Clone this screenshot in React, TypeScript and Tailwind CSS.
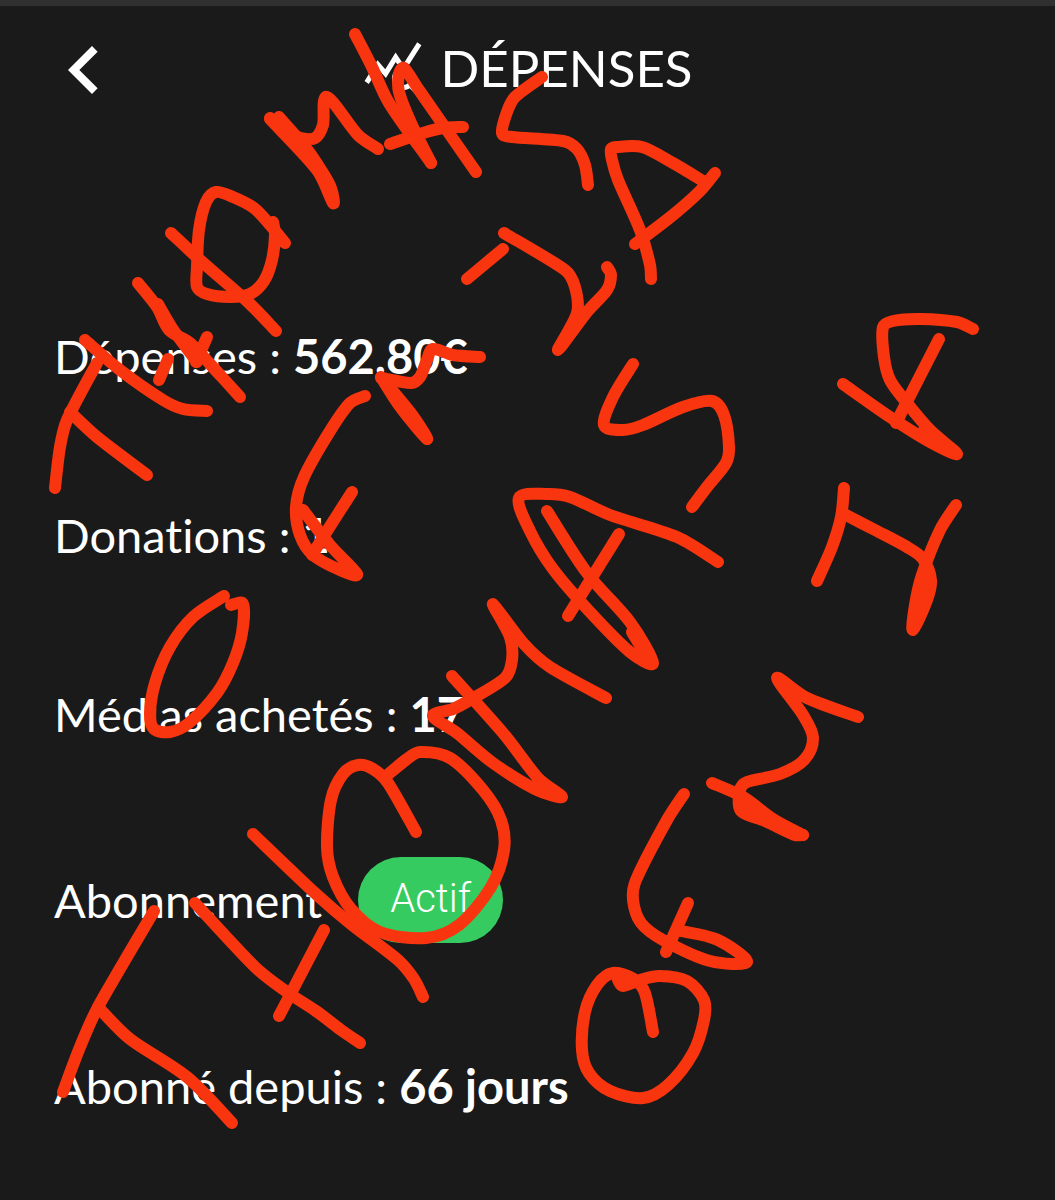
import React from 'react';
import { MdChevronLeft, MdQueryStats } from 'react-icons/md';

type Point = [number, number];

// Freehand marker strokes, one list of points per pen movement
const strokes: Point[][] = [
  [[55, 488], [60, 447], [67, 420], [97, 363]],
  [[70, 412], [97, 437], [147, 475]],
  [[85, 340], [120, 370], [163, 400], [183, 409], [207, 411]],
  [[138, 283], [157, 307], [169, 330], [190, 343], [220, 375], [240, 397]],
  [[158, 304], [172, 328], [197, 362]],
  [[207, 337], [196, 362]],
  [[168, 359], [159, 380]],
  [[171, 233], [200, 260], [250, 304], [276, 331]],
  [[285, 243], [271, 226], [254, 208], [233, 197], [216, 192], [206, 202], [199, 230], [197, 267], [197, 287], [207, 294], [230, 297], [250, 294], [264, 281], [272, 260], [275, 235], [273, 222]],
  [[270, 118], [287, 132], [301, 138], [315, 138], [323, 125], [327, 97], [358, 135], [378, 149]],
  [[279, 117], [306, 148], [321, 170], [331, 188], [333, 203], [317, 170], [270, 119]],
  [[355, 34], [372, 67], [389, 103], [431, 163]],
  [[431, 163], [411, 123], [399, 92], [399, 74], [404, 68], [419, 90], [476, 172]],
  [[390, 144], [423, 133], [443, 128], [463, 127]],
  [[542, 77], [515, 97], [507, 112], [502, 133], [512, 137], [563, 141], [577, 149], [585, 165], [588, 185]],
  [[651, 279], [650, 265], [640, 230], [618, 180], [612, 160], [611, 149], [617, 147], [642, 147], [673, 163], [703, 181]],
  [[715, 173], [700, 191], [673, 215], [635, 244]],
  [[504, 233], [565, 270], [575, 287], [577, 313], [558, 350], [587, 312], [607, 290], [611, 275], [607, 267]],
  [[503, 249], [467, 279]],
  [[480, 357], [453, 355], [433, 349], [427, 360], [420, 377], [411, 383], [381, 378]],
  [[381, 377], [401, 408], [427, 439], [413, 416], [381, 377]],
  [[365, 396], [350, 403], [330, 431], [304, 477], [296, 507], [300, 535], [313, 555], [340, 570], [357, 574], [330, 545], [303, 510]],
  [[352, 492], [327, 531], [312, 555]],
  [[224, 596], [193, 617], [170, 647], [155, 683], [150, 714], [154, 729], [170, 732], [189, 723], [217, 693], [233, 663], [242, 633], [243, 604], [231, 605]],
  [[633, 364], [613, 397], [604, 425], [623, 430], [643, 425], [683, 407], [712, 401], [724, 415], [729, 447], [726, 463], [707, 487], [692, 507]],
  [[718, 562], [677, 537], [610, 515], [570, 497], [547, 494], [519, 498], [530, 531], [553, 569], [590, 612], [630, 652], [653, 663], [630, 622], [587, 573], [547, 511]],
  [[632, 632], [643, 650]],
  [[619, 534], [568, 616]],
  [[606, 698], [550, 667], [524, 644], [493, 604], [510, 637], [512, 660], [505, 678], [470, 700], [453, 709], [433, 716], [457, 733], [493, 763], [535, 789], [562, 797], [538, 778], [503, 733], [452, 676]],
  [[973, 329], [957, 322], [920, 319], [893, 321], [883, 327], [884, 357], [890, 380], [907, 403], [930, 430], [957, 454], [930, 442], [890, 417], [843, 384]],
  [[924, 430], [945, 446]],
  [[939, 339], [896, 423]],
  [[844, 488], [841, 517], [832, 547], [817, 581]],
  [[842, 513], [875, 530], [907, 547], [923, 559], [931, 580], [927, 600], [913, 630], [915, 605], [922, 575], [940, 530], [956, 505]],
  [[922, 578], [923, 602], [918, 615]],
  [[858, 717], [807, 698], [777, 678], [803, 715], [813, 738], [804, 760], [780, 774], [747, 782], [740, 790], [741, 811], [765, 821], [795, 835], [803, 835]],
  [[712, 783], [743, 797], [773, 819], [803, 835]],
  [[746, 800], [750, 808], [785, 827]],
  [[684, 794], [667, 820], [636, 880], [633, 900], [641, 923], [663, 940], [710, 961], [747, 962], [718, 940], [681, 931]],
  [[688, 903], [666, 952]],
  [[653, 1032], [645, 993], [634, 979], [613, 973], [597, 985], [585, 1012], [582, 1050], [589, 1073], [610, 1091], [643, 1098], [668, 1085], [693, 1053], [704, 1020], [704, 1000], [687, 981], [660, 976], [640, 980], [623, 986], [618, 980]],
  [[416, 832], [388, 783], [373, 769], [358, 765], [343, 774], [331, 800], [327, 847], [333, 877], [351, 909], [380, 932], [426, 938], [459, 925], [491, 887], [504, 850], [501, 820], [483, 790], [450, 758], [420, 752], [407, 759], [385, 777]],
  [[253, 834], [316, 894], [351, 924], [398, 960], [414, 979], [423, 997]],
  [[195, 903], [255, 967], [287, 992], [316, 1011], [341, 1030], [360, 1043]],
  [[324, 930], [279, 1016]],
  [[154, 911], [98, 1007], [80, 1047], [63, 1092]],
  [[98, 1007], [130, 1039], [187, 1077], [232, 1123]],
];

// Runs a smooth curve through the points of a stroke
const toPath = (points: Point[]) => {
  let d = `M${points[0][0]} ${points[0][1]}`;
  for (let i = 0; i < points.length - 1; i++) {
    const p0 = points[i - 1] || points[i];
    const p1 = points[i];
    const p2 = points[i + 1];
    const p3 = points[i + 2] || p2;
    const length = Math.hypot(p2[0] - p1[0], p2[1] - p1[1]);
    const handle = (a: Point, b: Point) => {
      const dx = (b[0] - a[0]) / 6;
      const dy = (b[1] - a[1]) / 6;
      const scale = Math.min(1, length / 3 / (Math.hypot(dx, dy) || 1));
      return [dx * scale, dy * scale];
    };
    const h1 = handle(p0, p2);
    const h2 = handle(p1, p3);
    d += `C${p1[0] + h1[0]} ${p1[1] + h1[1]} ${p2[0] - h2[0]} ${p2[1] - h2[1]} ${p2[0]} ${p2[1]}`;
  }
  return d;
};

const Scribbles: React.FC = () => (
  <svg
    viewBox="0 0 1055 1200"
    fill="none"
    stroke="#f8350f"
    strokeWidth="12"
    strokeLinecap="round"
    strokeLinejoin="round"
    aria-hidden="true"
    className="absolute top-0 left-0 w-full pointer-events-none"
  >
    {strokes.map((points, index) => (
      <path key={index} d={toPath(points)} />
    ))}
  </svg>
);

interface StatProps {
  label: string;
  value: string;
}

const Stat: React.FC<StatProps> = ({ label, value }) => (
  <p>
    {label} : <strong className="font-bold">{value}</strong>
  </p>
);

const App: React.FC = () => {
  return (
    <div className="relative min-h-screen bg-[#1a1a1a] font-['Lato',sans-serif] [font-variant-ligatures:none] text-white overflow-hidden">
      <div className="h-[6px] bg-[#303030]" />

      {/* Header */}
      <header className="grid grid-cols-[96px_1fr_96px] items-center px-9 pt-4">
        <button type="button" aria-label="Retour">
          <MdChevronLeft className="w-24 h-24" />
        </button>
        <h1 className="flex items-center justify-center gap-4 pb-1 text-[51px] leading-[60px]">
          <MdQueryStats className="w-[62px] h-[62px]" />
          DÉPENSES
        </h1>
      </header>

      {/* Stats */}
      <main className="flex flex-col gap-[107px] px-[54px] pt-[202px] pb-10 text-[47px] leading-[72px]">
        <Stat label="Dépenses" value="562.80€" />
        <Stat label="Donations" value="1" />
        <Stat label="Médias achetés" value="17" />
        <div className="flex items-center gap-9">
          <span>Abonnement</span>
          <span className="h-[86px] px-8 rounded-full bg-[#36cb60] font-['Roboto',sans-serif] font-light text-[40px] leading-[84px]">
            Actif
          </span>
        </div>
        <Stat label="Abonné depuis" value="66 jours" />
      </main>

      <Scribbles />
    </div>
  );
};

export default App;
